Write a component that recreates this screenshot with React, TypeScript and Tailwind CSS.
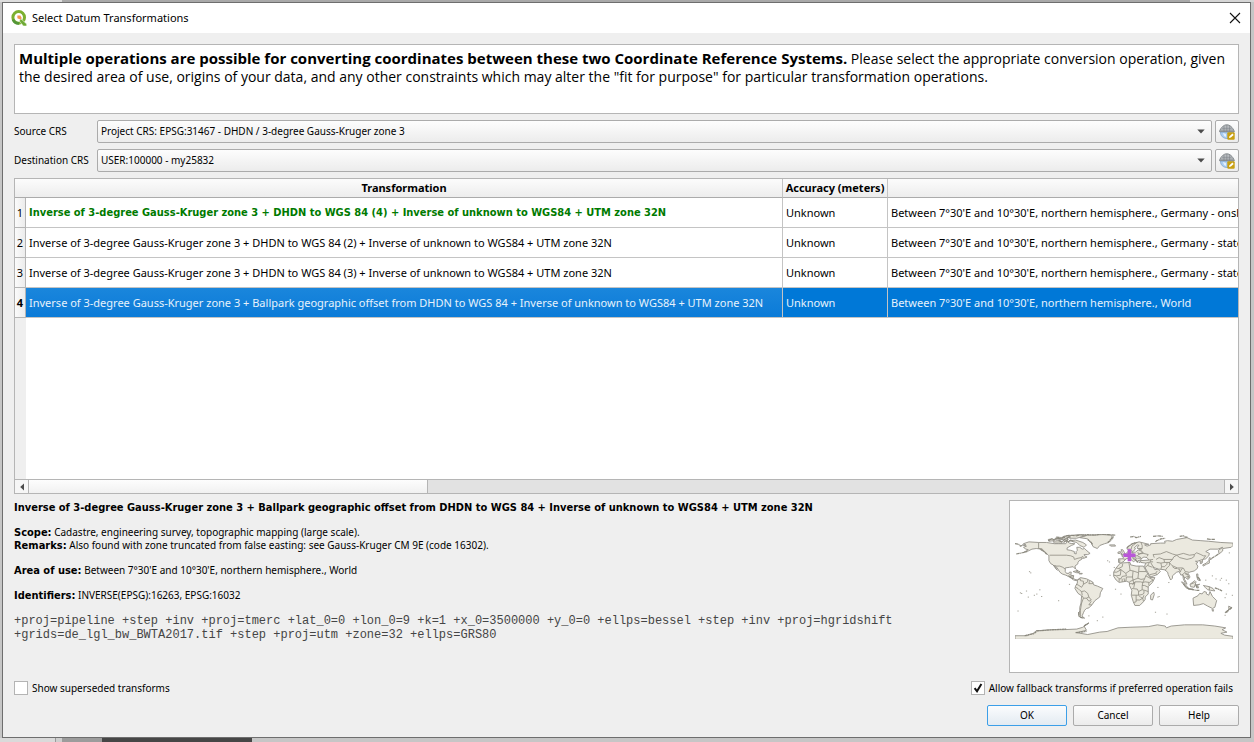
import { useState } from 'react';
import clsx from 'clsx';

interface Operation {
  id: number;
  name: string;
  accuracy: string;
  area: string;
  preferred?: boolean;
}

const OPERATIONS: Operation[] = [
  {
    id: 1,
    name: 'Inverse of 3-degree Gauss-Kruger zone 3 + DHDN to WGS 84 (4) + Inverse of unknown to WGS84 + UTM zone 32N',
    accuracy: 'Unknown',
    area: "Between 7°30'E and 10°30'E, northern hemisphere., Germany - onshore",
    preferred: true,
  },
  {
    id: 2,
    name: 'Inverse of 3-degree Gauss-Kruger zone 3 + DHDN to WGS 84 (2) + Inverse of unknown to WGS84 + UTM zone 32N',
    accuracy: 'Unknown',
    area: "Between 7°30'E and 10°30'E, northern hemisphere., Germany - states",
  },
  {
    id: 3,
    name: 'Inverse of 3-degree Gauss-Kruger zone 3 + DHDN to WGS 84 (3) + Inverse of unknown to WGS84 + UTM zone 32N',
    accuracy: 'Unknown',
    area: "Between 7°30'E and 10°30'E, northern hemisphere., Germany - states",
  },
  {
    id: 4,
    name: 'Inverse of 3-degree Gauss-Kruger zone 3 + Ballpark geographic offset from DHDN to WGS 84 + Inverse of unknown to WGS84 + UTM zone 32N',
    accuracy: 'Unknown',
    area: "Between 7°30'E and 10°30'E, northern hemisphere., World",
  },
];

// Land outlines, "lon,lat" pairs
const LAND = [
  // North America
  '-168,66 -162,66 -166,68 -157,71 -141,70 -128,70 -115,68 -108,68 -96,68 -94,72 -90,69 -86,68 -82,69 -82,67 -87,65 -94,61 -94,58 -88,57 -82,55 -82,52 -79,51 -79,55 -77,57 -78,62 -73,62 -69,59 -65,60 -61,56 -56,52 -60,50 -66,50 -65,48 -61,46 -66,44 -70,44 -70,42 -74,40 -76,37 -76,35 -81,31 -80,26 -82,28 -84,30 -90,29 -97,28 -97,22 -95,19 -91,19 -90,21 -87,21 -88,16 -83,15 -84,11 -81,9 -77,8 -79,7 -83,8 -86,10 -88,13 -92,14 -96,16 -102,18 -106,21 -109,26 -113,31 -115,31 -110,24 -112,26 -117,33 -121,35 -124,40 -124,48 -130,54 -135,59 -145,60 -152,59 -158,56 -165,54 -158,58 -162,59 -166,62 -161,64',
  // South America
  '-77,8 -72,12 -62,10 -52,5 -50,0 -44,-2 -35,-6 -39,-13 -40,-20 -48,-26 -53,-33 -58,-38 -62,-39 -65,-42 -67,-46 -69,-51 -68,-53 -65,-55 -72,-54 -75,-50 -73,-42 -73,-37 -71,-30 -70,-18 -76,-14 -81,-6 -80,-2 -77,3',
  // Africa
  '-6,36 10,37 11,33 20,31 32,31 37,22 43,12 51,12 47,4 40,-3 40,-15 35,-20 35,-24 32,-28 26,-34 18,-34 15,-27 12,-17 13,-9 9,-1 9,4 4,6 -8,4 -13,8 -17,14 -17,21 -13,28',
  // Eurasia
  '-9,37 -9,43 -2,43 -1,46 -4,48 2,51 5,53 8,57 10,57 11,54 19,54 24,58 30,60 22,60 22,63 25,65 22,66 17,61 19,60 16,56 13,55 11,59 5,59 5,62 14,68 25,71 41,67 34,66 38,64 44,66 44,68 60,69 68,69 67,72 72,73 80,72 87,75 104,78 113,74 127,73 140,72 160,70 180,69 180,65 177,62 163,60 163,56 157,51 156,57 163,62 155,59 142,59 135,55 141,52 140,48 135,43 130,42 129,36 126,35 126,38 125,40 121,39 118,39 122,37 119,35 122,31 121,27 116,23 108,21 106,19 109,13 107,10 105,9 101,13 100,13 100,9 103,4 104,1 101,3 98,10 97,17 94,16 91,22 87,21 80,15 80,11 77,8 73,17 72,21 67,25 57,26 51,28 48,30 51,25 56,26 60,22 55,17 44,13 39,21 35,28 34,31 36,36 28,37 27,40 41,41 38,45 33,46 28,43 28,41 23,40 22,37 19,42 14,45 18,40 16,38 9,44 3,43 0,39 -5,36',
  // Australia, New Zealand, Madagascar
  '114,-22 122,-18 125,-14 129,-15 132,-11 136,-12 136,-15 140,-17 142,-11 146,-19 153,-26 150,-37 146,-39 138,-35 131,-31 124,-33 115,-34',
  '173,-35 178,-38 175,-41 173,-39',
  '173,-41 171,-45 167,-46 170,-43',
  '49,-12 50,-16 47,-25 44,-24 44,-17',
  '145,-41 148,-41 147,-44',
  // Greenland, Iceland, Arctic islands
  '-73,78 -60,82 -35,83 -20,82 -20,75 -25,70 -32,68 -40,65 -44,60 -51,63 -54,69 -60,76',
  '-24,66 -15,66 -14,64 -22,64',
  '-90,73 -80,74 -68,70 -62,66 -66,62 -73,65 -78,70',
  '-117,72 -105,73 -102,69 -115,69',
  '-92,81 -75,83 -62,82 -78,77 -90,77',
  '-125,75 -118,76 -116,73 -124,72',
  '-114,77 -106,77 -100,75 -112,74',
  '-100,80 -93,81 -88,79 -97,77',
  // Britain, Ireland, Japan
  '-5,58 -2,58 1,53 1,51 -5,50 -3,54',
  '-10,54 -6,55 -6,52 -10,52',
  '141,45 145,43 141,41 141,36 136,34 131,31 130,33 136,36 140,40',
  // South-east Asia
  '95,5 98,4 106,-5 103,-5',
  '106,-6 114,-7 114,-8 106,-7',
  '109,1 117,7 119,5 116,-4 110,-3',
  '119,0 125,1 121,-1 123,-5 120,-5',
  '131,-1 141,-3 147,-6 150,-10 143,-9 138,-8 134,-4',
  '120,18 122,18 122,13 126,7 122,8 120,14',
  '-84,22 -80,23 -74,20 -78,20',
  '-74,19 -69,19 -69,18 -74,18',
  // Antarctica
  '-180,-84 -160,-84 -150,-80 -145,-76 -120,-74 -100,-74 -78,-73 -68,-70 -58,-63 -66,-68 -62,-75 -78,-79 -60,-82 -40,-78 -28,-77 -10,-71 10,-70 40,-69 55,-66 68,-68 70,-71 78,-68 100,-66 130,-66 150,-68 168,-71 162,-74 170,-78 160,-80 166,-83 180,-85 180,-90 -180,-90',
];

const BORDERS = [
  '-141,70 -141,60 -135,59', '-123,49 -95,49 -88,48 -83,46 -82,42 -76,44 -71,45 -68,47 -67,45',
  '-117,32 -111,31 -106,31 -101,29 -97,26', '-92,14 -90,17 -89,16', '-89,14 -83,15', '-86,11 -84,11',
  '-77,8 -72,10 -72,7 -67,6 -67,1 -70,-4 -76,0 -79,1', '-67,1 -60,5 -60,8', '-57,6 -58,2 -52,2 -51,4',
  '-80,-4 -76,-6 -73,-9 -70,-11 -69,-17', '-70,-11 -65,-10 -60,-14 -58,-20 -62,-22 -67,-22 -69,-18',
  '-67,-22 -70,-30 -72,-42 -72,-52', '-58,-20 -54,-25 -58,-27 -62,-22', '-54,-27 -58,-33 -53,-33',
  '-2,35 -3,30 -9,27 -13,28', '8,37 9,31 10,24 3,19 -5,25 -9,27', '10,24 15,23 24,20 25,31', '25,22 37,22',
  '-17,21 -12,21 -5,25', '-5,25 -6,16 -12,15 -17,16', '3,19 4,15 -3,14 -5,10 -8,10 -12,14', '15,23 14,13 4,13 3,6',
  '24,20 23,11 15,8 14,13', '-8,10 -8,5', '-3,10 -3,5', '0,11 1,6', '9,5 15,8 16,2 9,2', '23,11 28,9 34,10 36,15 39,18',
  '16,2 18,5 27,5 31,4 34,10', '36,15 43,11 48,8 42,4 35,5 31,4', '31,4 30,-2 30,-8 24,-11 22,-7 13,-6', '34,-1 40,-4',
  '30,-1 34,-1', '30,-8 34,-9 40,-11', '13,-17 24,-17 24,-11', '24,-17 30,-16 33,-14 33,-9', '20,-17 20,-28 16,-29',
  '20,-25 26,-25 31,-22 32,-27', '25,-18 28,-21 31,-22 33,-17', '14,0 18,4 16,-5', '41,4 41,-1',
  // Europe
  '-7,42 -7,37', '-2,43 3,42', '2,51 8,48 7,44', '6,53 7,50', '8,48 14,48 17,48 22,48 28,45', '14,54 15,51 13,50 14,48',
  '23,54 24,50 22,48', '15,51 19,49', '14,46 19,46 21,42', '22,44 28,44', '24,57 28,56 31,54 24,50', '31,54 32,52 24,51',
  '32,52 40,50 38,47', '28,60 28,56', '12,59 13,64 20,69', '30,60 30,65 28,70',
  // Asia
  '41,41 48,42', '44,41 44,38 48,38', '44,38 36,36', '44,37 48,30', '39,32 42,37', '35,29 39,32 47,29', '43,17 52,19 55,17', '52,19 55,23',
  '50,45 48,50 60,51 70,55 80,51 87,49', '54,37 61,36 62,30 61,26', '53,42 58,45 66,42 71,42 80,42 82,46 87,49',
  '61,36 67,37 71,37 75,37 80,42', '66,42 67,37', '62,30 67,30 71,34 71,37', '68,24 71,28 75,32 75,37', '75,37 79,32 88,28 97,28',
  '87,49 98,52 108,49 116,50 120,53 127,50 131,48 135,48 131,43', '87,49 92,45 104,42 112,44 116,47 116,50',
  '124,40 130,42', '126,38 129,38', '80,30 84,27 88,27', '89,26 92,26 92,22', '97,28 94,24 93,21', '98,28 101,22 107,21',
  '101,21 97,17 99,12', '101,18 105,17 107,13 103,14', '100,20 106,17', '104,11 107,12', '101,6 102,6', '141,-3 141,-9', '110,1 117,4',
];

// Ragged coasts that read darker than the rest
const RAGGED = [
  '-180,68 -174,67 -171,64 -168,65', '-178,51 -168,53 -160,55', '-138,59 -131,54 -127,50', '-75,-45 -74,-52 -68,-55',
  '-125,73 -119,76 -115,74 -111,77 -104,76 -99,78 -96,75 -90,80', '-112,79 -103,78 -95,81 -88,82 -79,81 -70,83',
  '-108,73 -103,71 -98,75 -95,72 -92,76', '-100,70 -96,73 -92,71 -88,74 -84,72', '-70,82 -60,83 -48,82 -38,84 -25,83 -14,82',
  '-27,70 -23,73 -22,76 -18,78 -18,81', '-52,67 -54,70 -60,75', '10,79 16,80 20,78 28,80', '48,80 56,81 64,80',
  '52,71 54,73 57,74 61,76 68,77', '92,80 98,81 101,79 105,79', '137,76 143,75 150,75', '5,61 8,64 12,67 16,69 22,70',
  '98,2 101,-2 104,-5 109,-7 114,-8 119,-9 125,-9', '118,1 120,-3 124,-4', '121,13 124,11 126,7', '150,-5 156,-7 162,-10',
  '178,-37 173,-41 167,-46', '-66,-68 -62,-65 -58,-63', '-164,-84 -157,-82 -150,-81 -145,-78', '-145,-76 -130,-75 -115,-74 -95,-73',
  '-80,-79 -72,-78 -62,-77', '18,43 20,40 23,38 27,37', '-91,14 -88,12 -84,10', '-79,25 -75,22 -72,21', '156,51 150,47 145,44',
];

const DOTS = [
  [-157, 21], [-155, 19], [-91, 0], [-28, 39], [-25, 37], [-24, 15], [-17, 28], [-140, -9], [-149, -18], [-145, -16], [-172, -14], [-137, -20], [-159, -21], [-176, -44],
  [-170, -15], [-109, -27], [-59, -52], [-36, -54], [55, -21], [57, -20], [70, -49], [55, -5], [73, 3], [145, 14], [134, 7], [158, 7], [168, 7], [178, -18], [166, -22], [168, -16],
  [172, 1], [-15, -8], [-6, -16], [51, -46], [-45, -60], [166, -51], [160, 10], [151, 9], [173, 52], [-162, -11],
];

function WorldMap() {
  return (
    <svg viewBox="-180 -84 360 175" className="w-[218px]" role="img" aria-label="Area of use">
      <g transform="scale(1 -1)" strokeLinejoin="round">
        {LAND.map((points, i) => (
          <polygon key={i} points={points} fill="#ebe9df" stroke="#94928a" strokeWidth="1.5" />
        ))}
        {BORDERS.map((points, i) => (
          <polyline key={i} points={points} fill="none" stroke="#8c8a80" strokeWidth="1.3" />
        ))}
        {RAGGED.map((points, i) => (
          <polyline key={i} points={points} fill="none" stroke="#8a887d" strokeWidth="2" strokeDasharray="5 0.6 2 0.8" />
        ))}
        {DOTS.map(([lon, lat], i) => (
          <rect key={i} x={lon} y={lat} width="2" height="1.6" fill="#a3a197" />
        ))}
      </g>
      {/* Area marker */}
      <path d="M9 -59V-39M-1 -49H19" stroke="#b957d8" strokeWidth="6" fill="none" />
    </svg>
  );
}

function QgisLogo() {
  return (
    <svg width="16" height="16" viewBox="0 0 16 16" aria-hidden="true">
      <circle cx="7.7" cy="7.4" r="5.8" fill="none" stroke="#7cb02f" strokeWidth="3" />
      <path d="M2 9.5a5.9 5.9 0 0 0 6 3.8" fill="none" stroke="#549638" strokeWidth="2.6" />
      <path d="M9.6 8.6l6.1 5.4V16h-3.4L8.4 11z" fill="#6faa35" stroke="#fff" strokeWidth="0.5" />
      <path d="M6.4 5.6h3l1.4 2.6-1.6 1.4-2.8-1.4z" fill="#f2954f" />
    </svg>
  );
}

function GlobeIcon() {
  return (
    <svg width="16" height="16" viewBox="0 0 16 16" className="shrink-0" aria-hidden="true">
      <path d="M1.4 8h13c0 4-3 6.5-6.5 6.5S1.4 12 1.4 8z" fill="#a9cdf2" stroke="#7fa3c9" strokeWidth="0.8" />
      <path d="M4 9l3 1v3l-2-1z" fill="#e3f0fc" />
      <path d="M0.4 7.6C2 3 5 0.8 7.8 0.8s5.8 2.2 7.6 6.8z" fill="#b9bdc0" stroke="#7d8286" strokeWidth="0.9" />
      <path d="M3 4.3h9.6M1.4 6.2h13M5 2v5.6M7.8 1v6.6M10.6 2v5.6" stroke="#7b8084" strokeWidth="0.6" />
      <rect x="8.3" y="8.3" width="7.4" height="7.4" rx="1" fill="#c9a011" />
      <path d="M10 14.1l.5-1.9 2.9-2.6 1.3 1.3-2.8 2.7z" fill="#fff" />
    </svg>
  );
}

interface CrsRowProps {
  id: string;
  label: string;
  value: string;
}

function CrsRow({ id, label, value }: CrsRowProps) {
  return (
    <div className="flex items-center">
      <label htmlFor={id} className="w-[83px] shrink-0 whitespace-nowrap">{label}</label>
      <div className="relative mr-[3px] flex-1">
        <select
          id={id}
          className="block h-[23px] w-full appearance-none rounded-xs border border-[#ababab] bg-linear-to-b from-[#fdfdfd] to-[#ececec] px-[3px] text-black"
        >
          <option>{value}</option>
        </select>
        <svg className="pointer-events-none absolute right-[7px] top-[9px]" width="8" height="5" viewBox="0 0 8 5" aria-hidden="true">
          <path d="M0.3 0.5h7.4L4 4.6z" fill="#4b4b4b" />
        </svg>
      </div>
      <button
        type="button"
        aria-label="Select CRS"
        className="flex h-[23px] w-6 items-center justify-center rounded-xs border border-[#ababab] bg-linear-to-b from-[#fdfdfd] to-[#ececec]"
      >
        <GlobeIcon />
      </button>
    </div>
  );
}

interface CheckOptionProps {
  id: string;
  label: string;
  checked: boolean;
  onChange: (checked: boolean) => void;
}

function CheckOption({ id, label, checked, onChange }: CheckOptionProps) {
  return (
    <div className="flex items-center gap-1">
      <span className="relative block h-[14px] w-[14px]">
        <input
          id={id}
          type="checkbox"
          checked={checked}
          onChange={e => onChange(e.target.checked)}
          className="block h-[14px] w-[14px] appearance-none border border-[#b4b4b4] bg-white"
        />
        {checked && (
          <svg className="pointer-events-none absolute inset-0" width="14" height="14" viewBox="0 0 14 14" aria-hidden="true">
            <path d="M3.6 7.2l2.4 3L10.4 3" fill="none" stroke="#111" strokeWidth="2" />
          </svg>
        )}
      </span>
      <label htmlFor={id}>{label}</label>
    </div>
  );
}

function OperationsTable({ selected, onSelect }: { selected: number; onSelect: (id: number) => void }) {
  return (
    <div className="flex flex-1 flex-col border border-[#b5b5b5] bg-white">
      <div className="flex flex-1 flex-col overflow-hidden">
        <table className="w-full table-fixed border-separate border-spacing-0 whitespace-nowrap text-[11px] leading-4">
          <colgroup>
            <col className="w-[11px]" />
            <col className="w-[757px]" />
            <col className="w-[105px]" />
            <col />
          </colgroup>
          <thead>
            <tr className="h-[19px] bg-linear-to-b from-[#fcfcfc] to-[#ececec]">
              <td className="border-b border-[#ababab] p-0" />
              <th scope="col" className="border-b border-r border-b-[#ababab] border-r-[#c4c4c4] p-0 font-bold">Transformation</th>
              <th scope="col" className="border-b border-r border-b-[#ababab] border-r-[#c4c4c4] p-0 font-bold">Accuracy (meters)</th>
              <td className="border-b border-[#ababab] p-0" />
            </tr>
          </thead>
          <tbody>
            {OPERATIONS.map(op => {
              const active = op.id === selected;
              return (
                <tr
                  key={op.id}
                  onClick={() => onSelect(op.id)}
                  className={clsx('h-[30px]', active ? 'bg-[#0078d7] text-[#e6f2fc]' : 'text-black')}
                >
                  <th
                    scope="row"
                    className={clsx(
                      'border-b border-r border-[#b5b5b5] bg-linear-to-r from-[#fbfbfb] to-[#ececec] p-0 text-black',
                      active ? 'font-bold' : 'font-normal'
                    )}
                  >
                    {op.id}
                  </th>
                  <td
                    className={clsx(
                      'overflow-hidden border-b border-r border-[#c4c4c4] py-0 pl-[3px] pr-0',
                      active && 'bg-linear-to-b from-[#1a86dc] to-[#0a7bd8]',
                      op.preferred && "font-['DejaVu_Sans_Condensed',sans-serif] font-bold text-[#007a00]"
                    )}
                  >
                    {op.name}
                  </td>
                  <td className="border-b border-r border-[#c4c4c4] py-0 pl-[3px] pr-0">{op.accuracy}</td>
                  <td className="overflow-hidden border-b border-[#c4c4c4] py-0 pl-[3px] pr-0">{op.area}</td>
                </tr>
              );
            })}
          </tbody>
        </table>
        <div className="w-[11px] flex-1 bg-[#efefef]" />
      </div>

      {/* Horizontal scroll bar */}
      <div className="flex h-[14px] border-t border-[#b5b5b5] bg-[#e2e2e2]">
        <button type="button" aria-label="Scroll left" className="flex w-[14px] items-center justify-center border-r border-[#b5b5b5] bg-[#f6f6f6]">
          <svg width="4" height="8" viewBox="0 0 4 8" aria-hidden="true"><path d="M4 0.5v7L0.2 4z" fill="#4b4b4b" /></svg>
        </button>
        <div className="w-[399px] border-r border-[#b5b5b5] bg-linear-to-b from-[#fdfdfd] to-[#f1f1f1]" />
        <div className="flex-1" />
        <button type="button" aria-label="Scroll right" className="flex w-[14px] items-center justify-center border-l border-[#b5b5b5] bg-[#f6f6f6]">
          <svg width="4" height="8" viewBox="0 0 4 8" aria-hidden="true"><path d="M0 0.5v7L3.8 4z" fill="#4b4b4b" /></svg>
        </button>
      </div>
    </div>
  );
}

function OperationDetails({ operation }: { operation: Operation }) {
  const strong = "font-['DejaVu_Sans_Condensed',sans-serif] text-[11px] font-bold";
  return (
    <div className="flex flex-1 flex-col gap-3 pt-px leading-[13px]">
      <h2 className={clsx(strong, 'leading-[13px]')}>{operation.name}</h2>
      <div>
        <p><b className={strong}>Scope:</b> Cadastre, engineering survey, topographic mapping (large scale).</p>
        <p><b className={strong}>Remarks:</b> Also found with zone truncated from false easting: see Gauss-Kruger CM 9E (code 16302).</p>
      </div>
      <p><b className={strong}>Area of use:</b> Between 7°30'E and 10°30'E, northern hemisphere., World</p>
      <p><b className={strong}>Identifiers:</b> INVERSE(EPSG):16263, EPSG:16032</p>
      <p className="font-['Liberation_Mono',monospace] text-xs leading-[14px] text-[#454545]">
        +proj=pipeline +step +inv +proj=tmerc +lat_0=0 +lon_0=9 +k=1 +x_0=3500000 +y_0=0 +ellps=bessel +step +inv +proj=hgridshift
        <br />
        +grids=de_lgl_bw_BWTA2017.tif +step +proj=utm +zone=32 +ellps=GRS80
      </p>
    </div>
  );
}

export default function App() {
  const [selected, setSelected] = useState(4);
  const [showSuperseded, setShowSuperseded] = useState(false);
  const [allowFallback, setAllowFallback] = useState(true);

  const operation = OPERATIONS.find(op => op.id === selected) ?? OPERATIONS[0];

  return (
    <div className="flex min-h-screen flex-col bg-[#c6c6c6] font-['Noto_Sans',sans-serif] text-[10px] leading-[13px] text-black">
      {/* Window behind */}
      <div className="flex h-[2px]">
        <div className="w-[62px] bg-[#dedede]" />
        <div className="flex-1 bg-[#a9a9a9]" />
        <div className="w-16 bg-[#d6d6d6]" />
      </div>

      <main className="ml-[2px] mr-[3px] flex flex-1 flex-col border border-[#6e6e6e] bg-[#efefef]">
        <header className="flex h-[30px] items-center bg-white pl-2 pr-[9px]">
          <QgisLogo />
          <h1 className="ml-[5px] flex-1 text-[11px] leading-4">Select Datum Transformations</h1>
          <button type="button" aria-label="Close">
            <svg width="12" height="12" viewBox="0 0 12 12" aria-hidden="true">
              <path d="M1 1l10 10M11 1L1 11" stroke="#111" strokeWidth="1.1" />
            </svg>
          </button>
        </header>

        <div className="flex flex-1 flex-col px-[11px] pb-[11px] pt-[11px]">
          <p className="mb-[6px] min-h-[70px] border border-[#b5b5b5] bg-white px-1 py-1 font-['Open_Sans',sans-serif] text-sm leading-[18px]">
            <b className="text-[15px]">Multiple operations are possible for converting coordinates between these two Coordinate Reference Systems.</b>{' '}
            Please select the appropriate conversion operation, given the desired area of use, origins of your data, and any other
            constraints which may alter the "fit for purpose" for particular transformation operations.
          </p>

          <div className="mb-[6px] flex flex-col gap-[6px]">
            <CrsRow id="source-crs" label="Source CRS" value="Project CRS: EPSG:31467 - DHDN / 3-degree Gauss-Kruger zone 3" />
            <CrsRow id="destination-crs" label="Destination CRS" value="USER:100000 - my25832" />
          </div>

          <OperationsTable selected={selected} onSelect={setSelected} />

          <div className="mt-[6px] flex gap-4">
            <OperationDetails operation={operation} />
            <div className="flex h-[173px] w-[230px] items-center justify-center border border-[#b5b5b5] bg-white">
              <WorldMap />
            </div>
          </div>

          <div className="mt-2 flex justify-between pr-[6px]">
            <CheckOption id="superseded" label="Show superseded transforms" checked={showSuperseded} onChange={setShowSuperseded} />
            <CheckOption id="fallback" label="Allow fallback transforms if preferred operation fails" checked={allowFallback} onChange={setAllowFallback} />
          </div>

          <div className="mt-[10px] flex justify-end gap-[6px]">
            <button type="button" className="h-[21px] w-20 rounded-xs border border-[#3c9fe8] bg-linear-to-b from-[#fbfcfd] to-[#e3ebf2]">OK</button>
            <button type="button" className="h-[21px] w-20 rounded-xs border border-[#ababab] bg-linear-to-b from-[#fdfdfd] to-[#ececec]">Cancel</button>
            <button type="button" className="h-[21px] w-20 rounded-xs border border-[#ababab] bg-linear-to-b from-[#fdfdfd] to-[#ececec]">Help</button>
          </div>
        </div>
      </main>

      <div className="flex h-1">
        <div className="w-[55px] bg-[#dadada]" />
        <div className="w-[7px] border-l border-[#9a9a9a] bg-[#cfcfcf]" />
        <div className="w-10 bg-[#9c9c9c]" />
        <div className="w-[150px] bg-[#464646]" />
      </div>
    </div>
  );
}
